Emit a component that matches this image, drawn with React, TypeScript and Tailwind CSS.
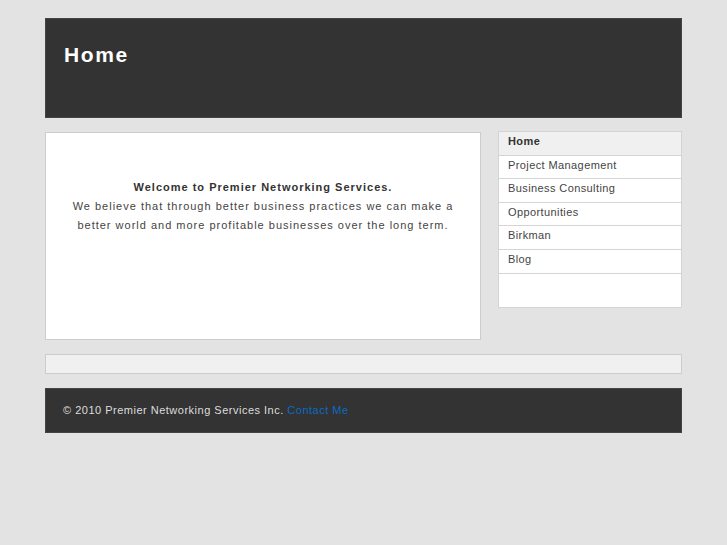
const nav = ['Home', 'Project Management', 'Business Consulting', 'Opportunities', 'Birkman', 'Blog'];

export default function App() {
  return (
    <div className="min-h-[545px] bg-[#e3e3e3] pt-[18px] font-['Liberation_Sans',Arial,sans-serif]">
      <div className="mx-[45px] w-[637px]">
        <header className="h-[100px] bg-[#333333] border border-[#444] px-[18px] pt-[22px]">
          <h1 className="text-[21px] font-bold leading-[28px] tracking-[1.6px] text-white">Home</h1>
        </header>

        <div className="mt-[14px] flex items-start justify-between">
          <div className="h-[208px] w-[436px] border border-[#cccccc] bg-white pt-[45px] text-center text-[11px] leading-[19px] tracking-[1px] text-[#444]">
            <p className="font-bold text-[#333]">Welcome to Premier Networking Services.</p>
            <p>We believe that through better business practices we can make a</p>
            <p>better world and more profitable businesses over the long term.</p>
          </div>

          <ul className="-mt-px h-[177px] w-[184px] border border-[#d4d4d4] bg-white text-[11px] tracking-[0.4px] text-[#444]">
            {nav.map((item, i) => (
              <li
                key={item}
                className={`h-[23.6px] border-b border-[#d4d4d4] pl-[9px] pt-[1px] leading-[16px] ${
                  i === 0 ? 'bg-[#f0f0f0] font-bold text-[#333]' : ''
                }`}
              >
                {item}
              </li>
            ))}
          </ul>
        </div>

        <div className="mt-[14px] h-[20px] border border-[#cccccc] bg-[#f0f0f0]" />

        <footer className="mt-[14px] flex h-[45px] items-center border border-[#444] bg-[#333333] px-[17px] text-[11px] tracking-[0.5px] text-[#dddddd]">
          <span>
            © 2010 Premier Networking Services Inc. <a className="text-[#0a6bc4]">Contact Me</a>
          </span>
        </footer>
      </div>
    </div>
  );
}
